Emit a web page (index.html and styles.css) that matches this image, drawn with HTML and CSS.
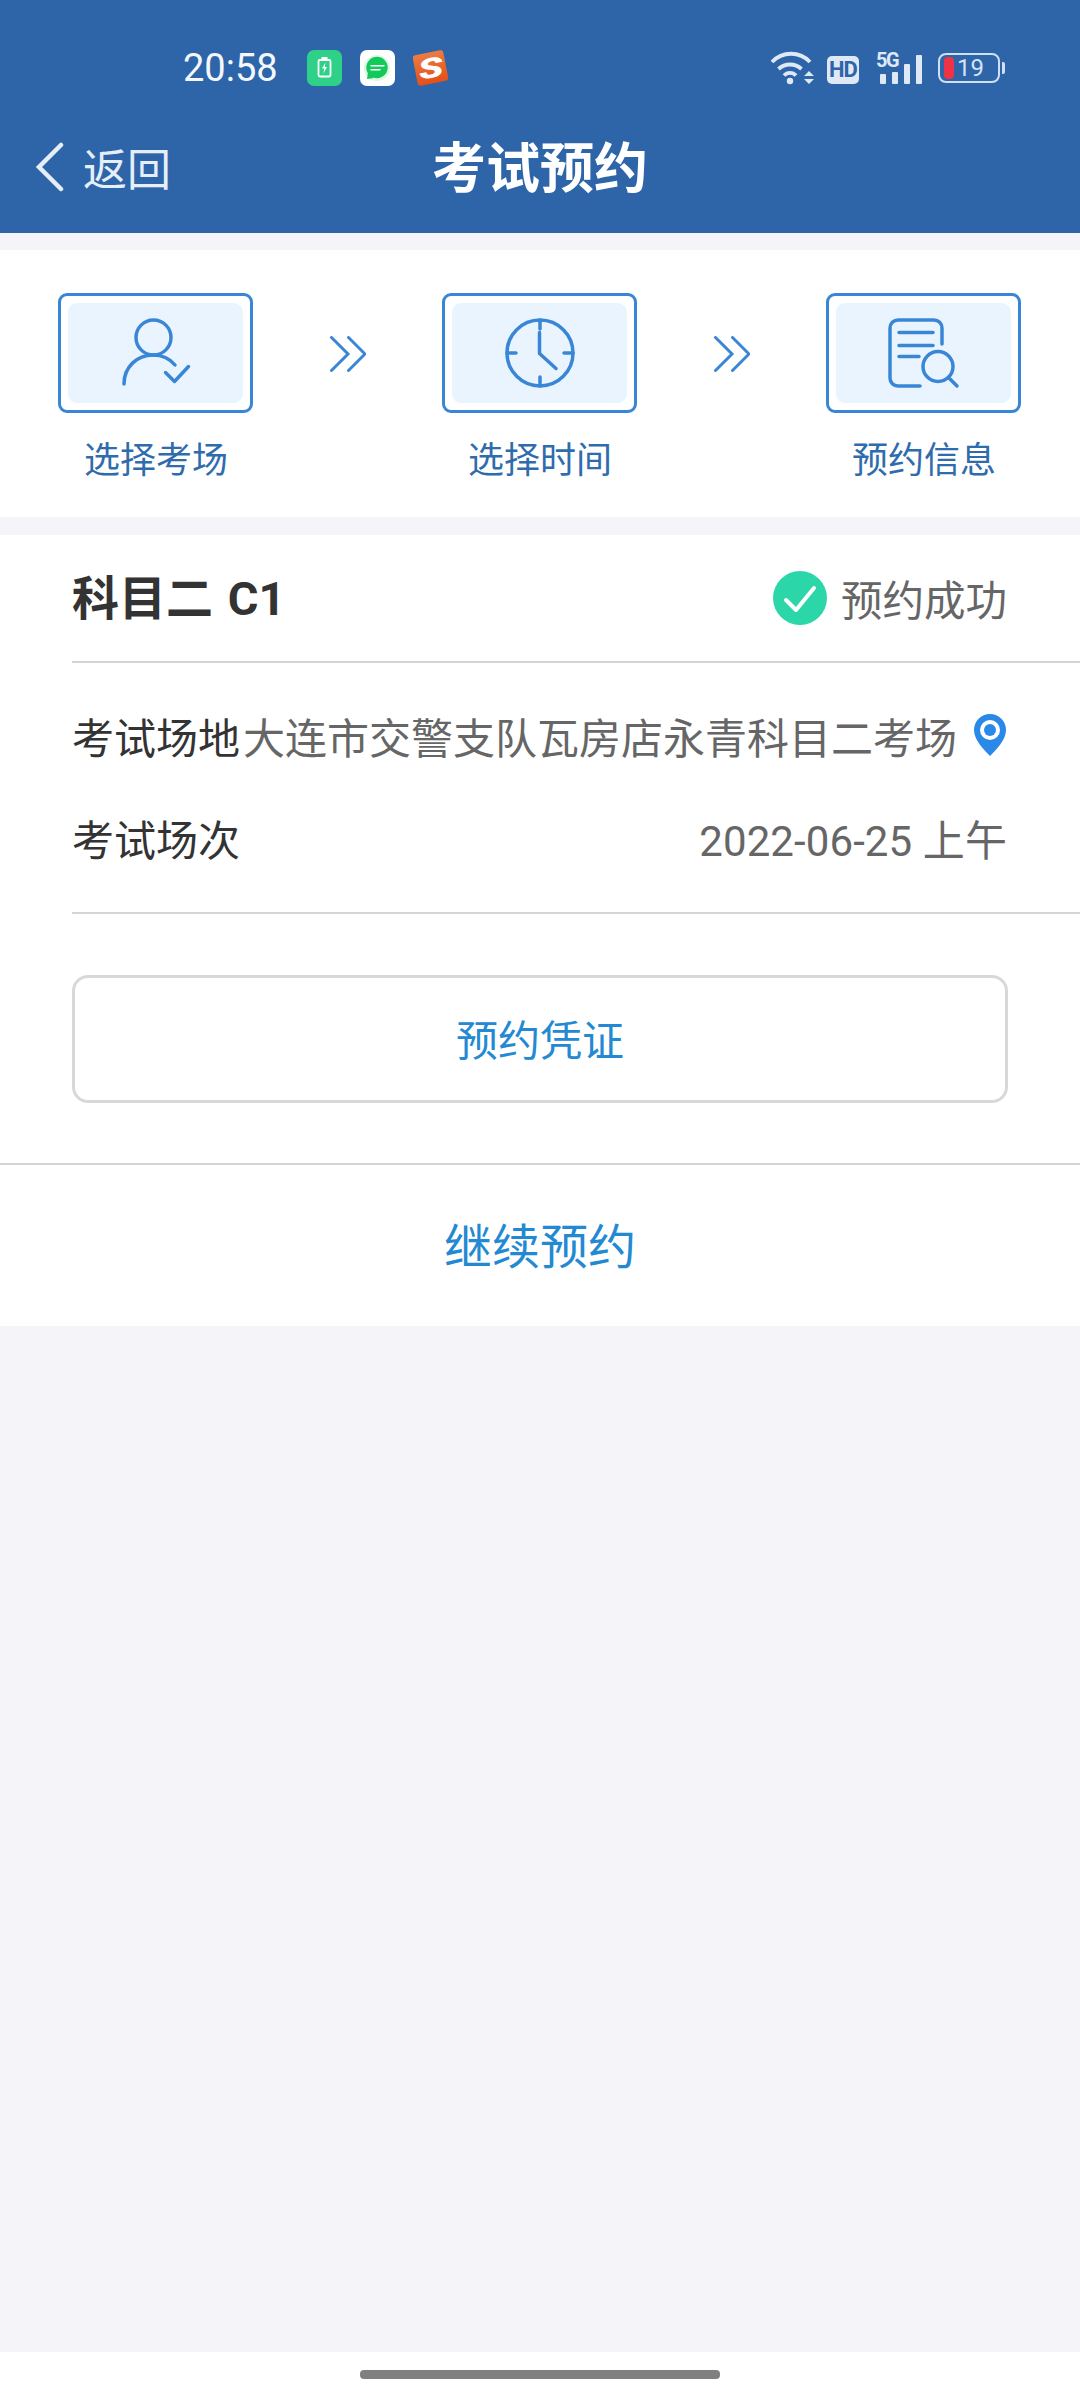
FILE: index.html
```html
<!DOCTYPE html>
<html lang="zh-CN">
<head>
  <meta charset="UTF-8">
  <meta name="viewport" content="width=device-width, initial-scale=1.0">
  <title>考试预约</title>
  <link rel="stylesheet" href="styles.css">
</head>
<body>
  <div class="page">
    <header class="header">
      <div class="status-bar">
        <span class="time">20:58</span>
        <div class="app-icons">
          <svg class="app-icon" viewBox="0 0 35 36">
            <rect width="35" height="36" rx="7" fill="#2fd088"/>
            <rect x="11.500" y="10" width="12" height="16.500" rx="1.500" fill="none" stroke="#fff" stroke-width="1.800"/>
            <path d="M14.500 7h6v2.500h-6z" fill="#fff"/>
            <path d="M18.500 12.500l-3.500 6h2.300l-1 5 3.700-6.500h-2.300z" fill="#fff"/>
          </svg>
          <svg class="app-icon" viewBox="0 0 35 36">
            <rect width="35" height="36" rx="7" fill="#fff"/>
            <circle cx="17" cy="18" r="13" fill="#12c95a" opacity="0.150"/>
            <path d="M7 29l1-7 6 6z" fill="#12c95a"/>
            <circle cx="17" cy="17.500" r="10.700" fill="#12c95a"/>
            <path d="M11 15.700h13M11 19.700h9" stroke="#fff" stroke-width="1.400" stroke-linecap="round"/>
          </svg>
          <svg class="app-icon" viewBox="0 0 36 36">
            <defs>
              <linearGradient id="sogou-bg" x1="0" y1="0" x2="0" y2="1">
                <stop offset="0" stop-color="#ee7c42"/>
                <stop offset="1" stop-color="#e44f18"/>
              </linearGradient>
            </defs>
            <g transform="rotate(-11 18 18)">
              <rect x="2" y="2" width="32" height="32" rx="3" fill="url(#sogou-bg)"/>
              <text class="sogou-s" transform="translate(18 28) scale(1.400 0.950)" text-anchor="middle">S</text>
            </g>
          </svg>
        </div>
        <div class="sys-icons">
          <svg class="wifi" viewBox="0 0 46 34">
            <g fill="none" stroke="#dfe8f5" stroke-width="3.800">
              <path d="M2 11A26 26 0 0 1 40 11"/>
              <path d="M8.500 18A17 17 0 0 1 31.500 18"/>
              <path d="M14 24.500A8 8 0 0 1 26 24.500"/>
            </g>
            <circle cx="20" cy="30" r="3.200" fill="#dfe8f5"/>
            <path d="M39 20l5 5h-10zM34 28h10l-5 5z" fill="#dfe8f5"/>
          </svg>
          <span class="hd">HD</span>
          <div class="signal">
            <span class="five-g">5G</span>
            <span class="bar bar-1"></span>
            <span class="bar bar-2"></span>
            <span class="bar bar-3"></span>
            <span class="bar bar-4"></span>
          </div>
          <div class="battery">
            <span class="battery-level"></span>
            <span class="battery-text">19</span>
          </div>
          <span class="battery-nub"></span>
        </div>
      </div>
      <div class="nav-bar">
        <div class="back">
          <svg class="back-arrow" viewBox="0 0 30 50">
            <path d="M26 3L4 25l22 22" fill="none" stroke="#e6eef8" stroke-width="4.500" stroke-linecap="round"/>
          </svg>
          <span>返回</span>
        </div>
        <h1 class="nav-title">考试预约</h1>
      </div>
    </header>

    <section class="steps">
      <div class="step">
        <div class="step-box">
          <div class="step-inner">
            <svg class="step-icon" viewBox="0 0 72 72">
              <g fill="none" stroke="#3a86d6" stroke-width="3.500" stroke-linecap="round" stroke-linejoin="round">
                <circle cx="33.500" cy="20.500" r="17.500"/>
                <path d="M4 67C4 50 17 38 33 38c9 0 17 4 22 10"/>
                <path d="M45.500 55.500l9 9 14-15"/>
              </g>
            </svg>
          </div>
        </div>
        <span class="step-label">选择考场</span>
      </div>
      <svg class="step-arrow" viewBox="0 0 36 36">
        <path d="M1.500 1.500L18 18 1.500 34.500M18.500 1.500L35 18 18.500 34.500" fill="none" stroke="#3a86d6" stroke-width="3" stroke-linecap="round"/>
      </svg>
      <div class="step">
        <div class="step-box">
          <div class="step-inner">
            <svg class="step-icon" viewBox="0 0 72 72">
              <g fill="none" stroke="#3a86d6" stroke-width="3.500" stroke-linecap="round" stroke-linejoin="round">
                <circle cx="36" cy="36" r="33"/>
                <path d="M36 3v9M36 60v9M3 36h9M60 36h9"/>
                <path d="M35.500 15.500v21L52 51.500"/>
              </g>
            </svg>
          </div>
        </div>
        <span class="step-label">选择时间</span>
      </div>
      <svg class="step-arrow" viewBox="0 0 36 36">
        <path d="M1.500 1.500L18 18 1.500 34.500M18.500 1.500L35 18 18.500 34.500" fill="none" stroke="#3a86d6" stroke-width="3" stroke-linecap="round"/>
      </svg>
      <div class="step">
        <div class="step-box">
          <div class="step-inner">
            <svg class="step-icon" viewBox="0 0 72 72">
              <g fill="none" stroke="#3a86d6" stroke-width="3.500" stroke-linecap="round" stroke-linejoin="round">
                <path d="M32 69H10a8 8 0 0 1-8-8V11a8 8 0 0 1 8-8h36a8 8 0 0 1 8 8v16"/>
                <path d="M11 15.500h34M11 28.500h34M11 39.500h20"/>
                <circle cx="50" cy="49.500" r="15"/>
                <path d="M60.500 60.500l8.500 8.500"/>
              </g>
            </svg>
          </div>
        </div>
        <span class="step-label">预约信息</span>
      </div>
    </section>

    <section class="card">
      <div class="card-head">
        <span class="subject">科目二 C1</span>
        <div class="result">
          <svg class="result-icon" viewBox="0 0 54 54">
            <circle cx="27" cy="27" r="27" fill="#2bd6a8"/>
            <path d="M13 29l10 10 18-22" fill="none" stroke="#fff" stroke-width="4" stroke-linecap="round" stroke-linejoin="round"/>
          </svg>
          <span>预约成功</span>
        </div>
      </div>
      <div class="info">
        <div class="info-row">
          <span class="info-label">考试场地</span>
          <span class="info-value">大连市交警支队瓦房店永青科目二考场</span>
          <svg class="pin" viewBox="0 0 34 44">
            <path d="M17 1C8 1 1 8 1 17c0 10 10 20 16 26 6-6 16-16 16-26C33 8 26 1 17 1z" fill="#2a88e8"/>
            <circle cx="17" cy="17" r="10" fill="#fff"/>
            <circle cx="17" cy="17" r="6" fill="#2a88e8"/>
          </svg>
        </div>
        <div class="info-row">
          <span class="info-label">考试场次</span>
          <span class="info-value info-date">2022-06-25 上午</span>
        </div>
      </div>
      <div class="voucher-wrap">
        <button class="voucher-btn">预约凭证</button>
      </div>
      <div class="continue">继续预约</div>
    </section>

    <div class="spacer"></div>
    <footer class="home-bar">
      <span class="home-indicator"></span>
    </footer>
  </div>
</body>
</html>
```

FILE: styles.css
```css
* {
  box-sizing: border-box;
}

body {
  margin: 0;
  padding: 0;
  background-color: #f4f4f9;
  font-family: Roboto, "Noto Sans CJK SC", "Noto Sans", sans-serif;
}

.page {
  display: flex;
  flex-direction: column;
  height: 2400px;
}

/* header */
.header {
  height: 233px;
  background-color: #2d65a8;
  color: #fff;
}

.status-bar {
  display: flex;
  align-items: center;
  height: 86px;
  padding: 50px 75px 0 183px;
}

.time {
  width: 124px;
  font-size: 38px;
  line-height: 36px;
  color: #f4f7fb;
}

.app-icons {
  display: flex;
  gap: 18px;
}

.app-icon {
  width: 35px;
  height: 36px;
}

.sogou-s {
  font-size: 30px;
  font-weight: 900;
  font-style: italic;
  fill: #fff;
}

.sys-icons {
  display: flex;
  align-items: center;
  margin-left: auto;
  height: 36px;
}

.wifi {
  width: 46px;
  height: 34px;
}

.hd {
  width: 32px;
  height: 28px;
  margin: 4px 0 0 11px;
  border-radius: 5px;
  background-color: #dfe8f5;
  color: #2d65a8;
  font-size: 22px;
  font-weight: 700;
  line-height: 28px;
  text-align: center;
  letter-spacing: -1px;
}

.signal {
  position: relative;
  display: flex;
  align-items: flex-end;
  gap: 6px;
  height: 30px;
  margin: 1px 0 0 21px;
}

.five-g {
  position: absolute;
  left: -4px;
  top: -2px;
  font-size: 20px;
  font-weight: 700;
  line-height: 16px;
  color: #dfe8f5;
  letter-spacing: -1.500px;
}

.bar {
  width: 6px;
  border-radius: 1px;
  background-color: #dfe8f5;
}

.bar-1 {
  height: 10px;
}

.bar-2 {
  height: 12px;
}

.bar-3 {
  height: 20px;
}

.bar-4 {
  height: 29px;
}

.battery {
  display: flex;
  align-items: center;
  width: 62px;
  height: 30px;
  margin-left: 16px;
  padding-left: 4px;
  border: 2px solid #cfe0f5;
  border-radius: 8px;
}

.battery-level {
  width: 10px;
  height: 22px;
  border-radius: 4px;
  background-color: #ee3346;
}

.battery-text {
  margin-left: 3px;
  font-size: 24px;
  line-height: 26px;
  color: #d5e3f5;
}

.battery-nub {
  width: 3px;
  height: 12px;
  margin-left: 2px;
  border-radius: 0 2px 2px 0;
  background-color: #cfe0f5;
}

.nav-bar {
  position: relative;
  display: flex;
  align-items: center;
  justify-content: center;
  height: 82px;
  margin-top: 43px;
}

.back {
  position: absolute;
  left: 35px;
  top: -3px;
  display: flex;
  align-items: center;
  gap: 18px;
  height: 82px;
  font-size: 44px;
  color: #e6eef8;
}

.back-arrow {
  width: 30px;
  height: 50px;
}

.nav-title {
  margin: 0;
  font-size: 54px;
  font-weight: 700;
  line-height: 82px;
}

/* steps */
.steps {
  display: flex;
  align-items: flex-start;
  justify-content: space-between;
  height: 267px;
  margin-top: 17px;
  padding: 43px 59px 0 58px;
  background-color: #fff;
}

.step {
  display: flex;
  flex-direction: column;
  align-items: center;
  gap: 24px;
  width: 195px;
}

.step-box {
  width: 195px;
  height: 120px;
  padding: 7px;
  border: 3px solid #3a86d6;
  border-radius: 9px;
}

.step-inner {
  display: flex;
  align-items: center;
  justify-content: center;
  height: 100px;
  border-radius: 9px;
  background-color: #eaf4ff;
}

.step-icon {
  width: 72px;
  height: 72px;
}

.step-arrow {
  width: 36px;
  height: 36px;
  margin-top: 43px;
}

.step-label {
  padding-left: 1px;
  font-size: 36px;
  line-height: 48px;
  color: #2f6cac;
}

/* card */
.card {
  margin-top: 18px;
  background-color: #fff;
}

.card-head {
  display: flex;
  align-items: center;
  justify-content: space-between;
  height: 128px;
  margin-left: 72px;
  padding-right: 73px;
  border-bottom: 2px solid #d4d4d4;
}

.subject {
  margin-top: 2px;
  font-size: 47px;
  font-weight: 700;
  line-height: 60px;
  word-spacing: 3px;
  color: #333;
}

.result {
  display: flex;
  align-items: center;
  gap: 14px;
  font-size: 41.500px;
  color: #666;
}

.result-icon {
  width: 54px;
  height: 54px;
}

.info {
  display: flex;
  flex-direction: column;
  gap: 38px;
  margin-left: 72px;
  padding: 40px 0 43px;
  border-bottom: 2px solid #d4d4d4;
}

.info-row {
  display: flex;
  align-items: center;
  height: 64px;
  padding-right: 73px;
  font-size: 42px;
}

.info-label {
  width: 171px;
  color: #333;
}

.info-value {
  color: #666;
}

.info-date {
  margin-left: auto;
  letter-spacing: 0.100px;
}

.pin {
  width: 34px;
  height: 44px;
  margin-left: auto;
}

.voucher-wrap {
  padding: 61px 72px 60px;
  border-bottom: 2px solid #d4d4d4;
}

.voucher-btn {
  display: block;
  width: 100%;
  height: 128px;
  padding: 0 0 3px;
  border: 3px solid #d8d8d8;
  border-radius: 16px;
  background-color: #fff;
  color: #2389d2;
  font-family: inherit;
  font-size: 42px;
}

.continue {
  height: 161px;
  font-size: 48px;
  line-height: 166px;
  text-align: center;
  color: #2389d2;
}

.spacer {
  flex: 1;
}

.home-bar {
  display: flex;
  justify-content: center;
  height: 48px;
  padding-top: 18px;
  background-color: #fff;
}

.home-indicator {
  width: 360px;
  height: 9px;
  border-radius: 4px;
  background-color: #808080;
}
```
